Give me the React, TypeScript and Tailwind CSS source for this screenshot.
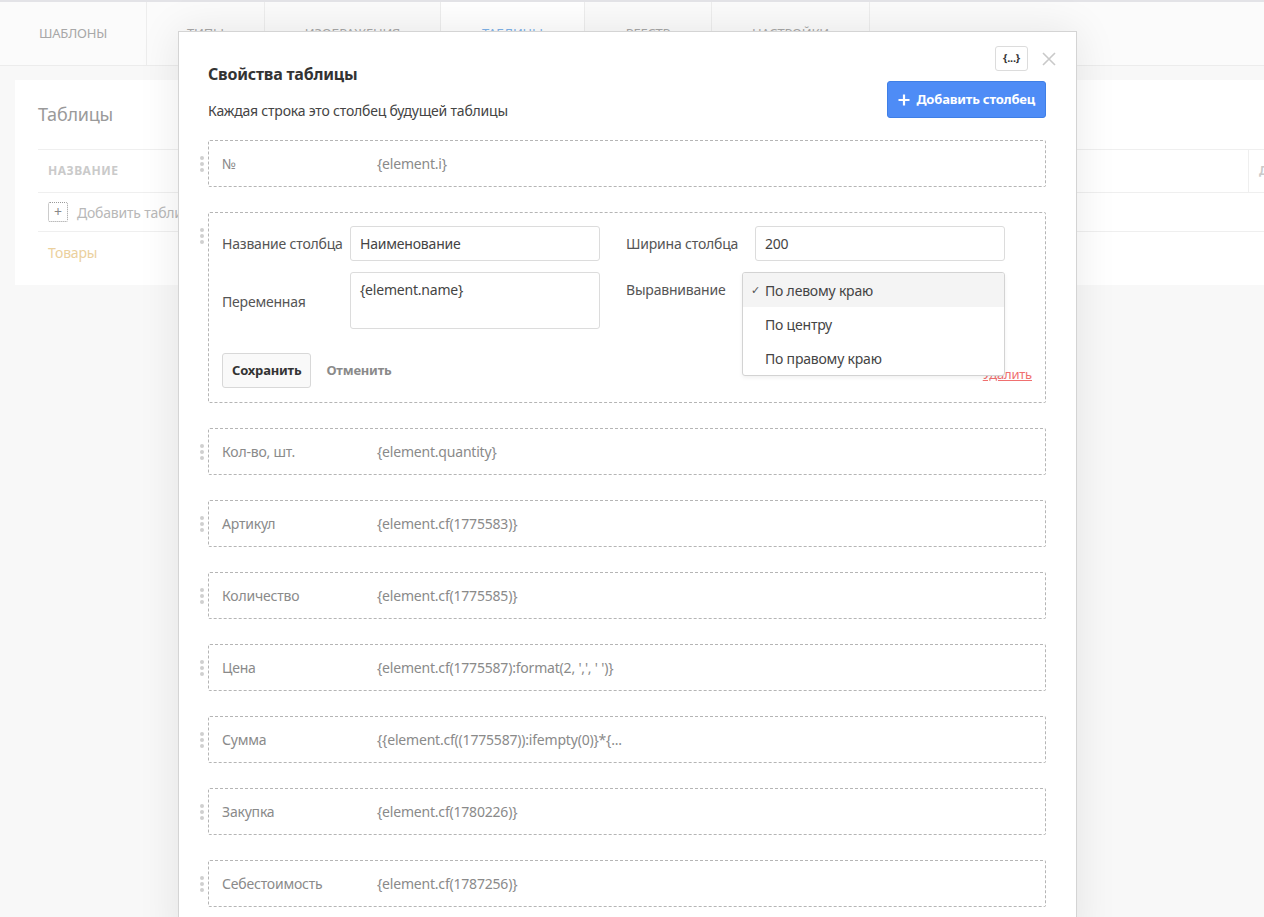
import React from 'react'

const tabs = [
  { label: 'Шаблоны', w: 'w-[147px]' },
  { label: 'Типы', w: 'w-[118px]' },
  { label: 'Изображения', w: 'w-[176px]' },
  { label: 'Таблицы', w: 'w-[144px]', active: true },
  { label: 'Реестр', w: 'w-[127px]' },
  { label: 'Настройки', w: 'w-[158px]' },
]

const columns: [string, string][] = [
  ['Кол-во, шт.', '{element.quantity}'],
  ['Артикул', '{element.cf(1775583)}'],
  ['Количество', '{element.cf(1775585)}'],
  ['Цена', "{element.cf(1775587):format(2, ',', ' ')}"],
  ['Сумма', '{{element.cf((1775587)):ifempty(0)}*{...'],
  ['Закупка', '{element.cf(1780226)}'],
  ['Себестоимость', '{element.cf(1787256)}'],
]

function Handle({ top }: { top: string }) {
  return (
    <div className={`absolute left-[-9px] flex flex-col gap-[2px] ${top}`}>
      <span className="h-[4px] w-[4px] rounded-full bg-[#cfcfcf]" />
      <span className="h-[4px] w-[4px] rounded-full bg-[#cfcfcf]" />
      <span className="h-[4px] w-[4px] rounded-full bg-[#cfcfcf]" />
    </div>
  )
}

function ColumnRow({ name, value }: { name: string; value: string }) {
  return (
    <div className="relative flex h-[47px] items-center rounded-[2px] border border-dashed border-[#b5b5b5] pl-[13px] text-[14px] text-[#8a8a8a]">
      <Handle top="top-[15px]" />
      <span className="w-[155px]">{name}</span>
      <span>{value}</span>
    </div>
  )
}

function EditRow() {
  return (
    <div className="relative rounded-[2px] border border-dashed border-[#b5b5b5] px-[13px] pt-[13px] pb-[14px] text-[14px] text-[#555]">
      <Handle top="top-[15px]" />
      <div className="flex">
        <div className="flex w-[404px] flex-col gap-[11px]">
          <div className="flex items-center">
            <span className="w-[128px]">Название столбца</span>
            <div className="flex h-[35px] w-[250px] items-center rounded-[3px] border border-[#dcdcdc] px-[9px] text-[#444]">
              Наименование
            </div>
          </div>
          <div className="flex items-center">
            <span className="w-[128px] pt-[2px]">Переменная</span>
            <div className="h-[57px] w-[250px] rounded-[3px] border border-[#dcdcdc] px-[9px] pt-[8px] leading-[18px] text-[#444]">
              {'{element.name}'}
            </div>
          </div>
        </div>
        <div className="flex flex-col gap-[11px]">
          <div className="flex items-center">
            <span className="w-[129px]">Ширина столбца</span>
            <div className="flex h-[35px] w-[250px] items-center rounded-[3px] border border-[#dcdcdc] px-[9px] text-[#444]">
              200
            </div>
          </div>
          <div className="flex items-start">
            <span className="w-[129px] pt-[7px]">Выравнивание</span>
            <div className="relative h-[35px] w-[250px]">
              <div className="absolute top-0 left-[-13px] z-10 w-[263px] overflow-hidden rounded-[3px] border border-[#d3d3d3] bg-white text-[#444] shadow-[0_2px_4px_rgba(0,0,0,0.06)]">
                <div className="flex h-[34px] items-center bg-[#f4f4f4] pl-[8px]">
                  <span className="w-[14px] text-[11px] text-[#555]">✓</span>
                  <span>По левому краю</span>
                </div>
                <div className="flex h-[34px] items-center pl-[22px]">По центру</div>
                <div className="flex h-[34px] items-center pl-[22px]">По правому краю</div>
              </div>
            </div>
          </div>
        </div>
      </div>
      <div className="mt-[24px] flex items-center">
        <button className="h-[35px] rounded-[3px] border border-[#d8d8d8] bg-[#f9f9f9] px-[9px] text-[13px] font-bold text-[#333]">
          Сохранить
        </button>
        <button className="ml-[15px] text-[13px] font-bold text-[#8a8a8a]">Отменить</button>
        <span className="mt-[9px] ml-auto text-[13px] text-[#f07070] underline">Удалить</span>
      </div>
    </div>
  )
}

export default function App() {
  return (
    <div
      className="relative h-[917px] w-full overflow-hidden bg-[#f8f8f8] tracking-[-0.2px]"
      style={{ fontFamily: '"Noto Sans", "Open Sans", sans-serif' }}
    >
      {/* top tabs */}
      <div className="flex h-[66px] border-t-2 border-b border-t-[#e3e3e7] border-b-[#ececec] bg-[#fbfbfb]">
        {tabs.map((t) => (
          <div
            key={t.label}
            className={`flex items-center justify-center border-r border-[#ededed] text-[13px] uppercase ${t.w} ${
              t.active ? 'bg-white text-[#7fb3ea]' : 'text-[#a8a8a8]'
            }`}
          >
            {t.label}
          </div>
        ))}
      </div>

      {/* background card */}
      <div className="mt-[14px] ml-[15px] h-[205px] w-[1300px] bg-white pl-[23px]">
        <div className="pt-[21px] text-[18px] text-[#9a9a9a]">Таблицы</div>
        <div className="mt-[21px] flex h-[44px] items-center border-y border-[#efefef]">
          <span className="w-[1210px] pl-[10px] text-[12px] font-bold tracking-[0.5px] text-[#cacaca]">НАЗВАНИЕ</span>
          <span className="flex h-full items-center border-l border-[#efefef] pl-[10px] text-[12px] font-bold text-[#cacaca]">
            ДАТА
          </span>
        </div>
        <div className="flex h-[39px] items-center border-b border-[#efefef] pl-[10px] text-[14px] text-[#b8b8b8]">
          <span className="mr-[9px] flex h-[20px] w-[20px] items-center justify-center rounded-[2px] border border-dotted border-[#999] text-[14px] leading-none text-[#888]">
            +
          </span>
          Добавить таблицу
        </div>
        <div className="flex h-[40px] items-center pl-[10px] text-[14px] text-[#ebd09d]">Товары</div>
      </div>

      {/* dialog */}
      <div className="absolute top-[31px] bottom-[-30px] left-[178px] w-[899px] border border-[#d4d4d4] bg-white pr-[30px] pl-[29px] shadow-[0_0_40px_rgba(0,0,0,0.09)]">
        <div className="absolute top-[14px] right-[48px] flex h-[25px] w-[33px] items-center justify-center rounded-[3px] border border-[#dcdcdc] text-[11px] font-bold text-[#333]">
          {'{...}'}
        </div>
        <svg className="absolute top-[20px] right-[20px]" width="14" height="14" viewBox="0 0 14 14">
          <path d="M1 1 L13 13 M13 1 L1 13" stroke="#c9c9c9" strokeWidth="1.6" />
        </svg>

        <div className="flex justify-between pt-[31px]">
          <div>
            <div className="text-[16px] leading-[22px] font-bold text-[#333]">Свойства таблицы</div>
            <div className="mt-[16px] text-[14px] leading-[20px] text-[#444]">Каждая строка это столбец будущей таблицы</div>
          </div>
          <button className="mt-[18px] flex h-[37px] items-center gap-[6px] rounded-[3px] border border-[#3f7fe6] bg-[#4e8cf6] px-[10px] text-[13px] font-bold text-white">
            <svg width="12" height="12" viewBox="0 0 12 12">
              <path d="M6 0.5 V11.5 M0.5 6 H11.5" stroke="white" strokeWidth="2.2" />
            </svg>
            Добавить столбец
          </button>
        </div>

        <div className="mt-[19px] flex flex-col gap-[25px]">
          <ColumnRow name="№" value="{element.i}" />
          <EditRow />
          {columns.map(([n, v]) => (
            <ColumnRow key={n} name={n} value={v} />
          ))}
        </div>
      </div>
    </div>
  )
}
